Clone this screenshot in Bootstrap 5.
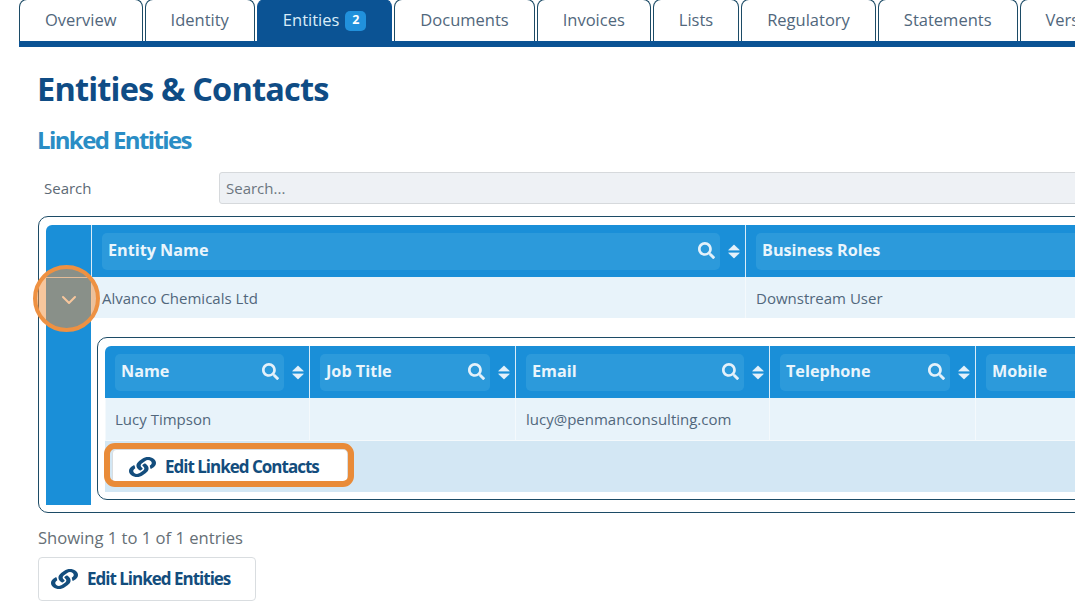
<!DOCTYPE html>
<html lang="en">
<head>
<meta charset="utf-8">
<title>Entities & Contacts</title>
<link href="https://cdn.jsdelivr.net/npm/bootstrap@5.3.0/dist/css/bootstrap.min.css" rel="stylesheet">
<style>
html,body{height:601px;overflow:hidden;background:#fff}
body{font-family:"Open Sans","Liberation Sans",sans-serif;color:#51677c;position:relative}
.page-shell{width:1500px;padding-left:19px}
.tab-strip{flex-wrap:nowrap;margin-top:-1px;border-bottom:6px solid #0b5394;gap:2px;height:48px}
.tab-strip .nav-link{height:42px;margin:0;padding:0 25px;display:flex;align-items:center;font-size:16.5px;color:#51677c;border:1px solid #1c4b66;border-bottom:0;border-radius:8px 8px 0 0;background:#fff;line-height:1}
.tab-strip .nav-link.active{background:#0b5394;color:#d9ecf9;border-color:#0b5394}
.tab-count{background:#2191dc;color:#fff;font-size:12.5px;font-weight:700;border-radius:5px;width:21px;height:20px;display:inline-flex;align-items:center;justify-content:center;margin-left:6px}
.content-pane{padding-left:19px}
.main-title{font-size:32.5px;font-weight:700;color:#0f4c85;letter-spacing:-.82px;margin:20px 0 0 -1px;line-height:44px}
.sub-title{font-size:24px;font-weight:700;color:#2a8dc5;letter-spacing:-1.6px;margin:12px 0 0 -1px;line-height:34px}
.search-row{margin-top:15px;height:32px}
.search-label{width:181px;padding-left:6px;font-size:15px;color:#5d6a75}
.search-input{flex:1;height:32px;font-size:15px;background:#eef1f5;border:1px solid #d6d9dc;border-radius:3px 0 0 3px;padding:0 6px;color:#5d6a75}
.search-input::placeholder{color:#6c7680;opacity:1}
.frame-box{border:1px solid #1c4b66;border-radius:10px;padding:8px 7px;margin-top:12px;height:297px}
.frame-box.frame-inner{margin:0;height:163px;padding:8px 7px;border-radius:10px}
.data-grid{table-layout:fixed;border-collapse:separate;border-spacing:0;margin:0;width:auto}
.data-grid>*>tr>*{padding:0;border:0;box-shadow:none;background:none;color:inherit;font-weight:400;vertical-align:middle}
.data-grid>thead>tr>th{background:#1a8fd8;height:52px;border-left:1px solid #d9ecf8;padding:0 5px 0 10px}
.data-grid>thead>tr>th:first-child{border-left:0}
.outer-grid>thead>tr>th:first-child{border-radius:6px 0 0 0}
.inner-grid>thead>tr>th:first-child{border-radius:6px 0 0 0}
.data-grid>tbody>tr>td.data-cell{background:#e8f3fa;height:41px;font-size:15px;color:#51677c;padding-left:10px;border-left:1px solid #f4f9fc}
.outer-grid>tbody>tr>td.data-cell{padding-top:2px}
.inner-grid>tbody>tr>td.data-cell{height:42px}
.inner-grid>tbody>tr>td.data-cell:first-child{padding-left:9px}
.outer-grid>tbody>tr>td.rail-cell{background:#1a8fd8;padding:0;text-align:center;border-left:0;border-top:1px solid #d9ecf8}
.outer-grid>tbody>tr>td.rail-fill{background:#1a8fd8;border-top:0}
.outer-grid>tbody>tr>td.nest-cell{padding:19px 0 5px 6px;vertical-align:top}
.head-wrap{display:flex;align-items:center;gap:8px;color:#fff}
.head-pill{flex:1;min-width:0;height:37px;background:#2c9adb;border-radius:5px;display:flex;align-items:center;justify-content:space-between;padding:0 5px 2px 6px;font-size:16.2px;font-weight:700;color:#eaf5fc;white-space:nowrap}
.ico-search{width:17px;height:17px;fill:#e4f1fa;flex:none}
.ico-sort{width:12px;height:15px;fill:#e4f1fa;flex:none}
.ico-chev{width:16px;height:10px;fill:none;stroke:#fff;stroke-width:2;stroke-linecap:round;stroke-linejoin:round}
.tool-row>td{background:#d3e7f4!important;height:52px;padding:0 0 0 7px!important;border-top:1px solid #f4f9fc!important}
.action-btn{display:inline-flex;align-items:center;gap:9px;background:#fff;border:1px solid #d9dde0;border-radius:4px;color:#134d7d;font-weight:700;letter-spacing:-1px;font-size:17px;padding:0}
.action-small{width:236px;height:35px;padding-left:16px}
.action-wide{width:218px;height:44px;padding-left:12px}
.ico-link{width:27px;height:20px;fill:#134d7d;flex:none}
.entries-note{font-size:16.6px;color:#666f76;margin-top:14px;line-height:22px;margin-bottom:8px}
.spot-ring{position:absolute;left:33px;top:265px;width:67px;height:67px;border-radius:50%;border:4px solid #ee9142;background:rgba(240,145,66,.52)}
.spot-box{position:absolute;left:104px;top:443px;width:250px;height:44px;border:6px solid #e98b38;border-radius:11px}
</style>
</head>
<body>
<svg width="0" height="0" class="d-block position-absolute" aria-hidden="true">
<defs>
<symbol id="s-search" viewBox="0 0 512 512"><path d="M505 442.7L405.3 343c-4.5-4.5-10.6-7-17-7H372c27.6-35.3 44-79.7 44-128C416 93.1 322.9 0 208 0S0 93.1 0 208s93.1 208 208 208c48.3 0 92.7-16.4 128-44v16.3c0 6.4 2.5 12.5 7 17l99.7 99.7c9.4 9.4 24.6 9.4 33.9 0l28.3-28.3c9.4-9.4 9.4-24.6.1-34zM208 336c-70.7 0-128-57.2-128-128 0-70.7 57.2-128 128-128 70.7 0 128 57.2 128 128 0 70.7-57.2 128-128 128z"/></symbol>
<symbol id="s-sort" viewBox="0 0 12 15"><path d="M6 .9 11.3 6H.7zM6 14.1.7 9h10.6z" stroke="#e4f1fa" stroke-width=".8" stroke-linejoin="round"/></symbol>
<symbol id="s-link" viewBox="0 0 512 512" preserveAspectRatio="none"><path d="M326.612 185.391c59.747 59.809 58.927 155.698.36 214.59-.11.12-.24.25-.36.37l-67.2 67.2c-59.27 59.27-155.699 59.262-214.96 0-59.27-59.26-59.27-155.7 0-214.96l37.106-37.106c9.84-9.84 26.786-3.3 27.294 10.606.648 17.722 3.826 35.527 9.69 52.721 1.986 5.822.567 12.262-3.783 16.612l-13.087 13.087c-28.026 28.026-28.905 73.66-1.155 101.96 28.024 28.579 74.086 28.749 102.325.51l67.2-67.19c28.191-28.191 28.073-73.757 0-101.83-3.701-3.694-7.429-6.564-10.341-8.569a16.037 16.037 0 0 1-6.947-12.606c-.396-10.567 3.348-21.456 11.698-29.806l21.054-21.055c5.521-5.521 14.182-6.199 20.584-1.731a152.482 152.482 0 0 1 20.522 17.197zM467.547 44.449c-59.261-59.262-155.69-59.27-214.96 0l-67.2 67.2c-.12.12-.25.25-.36.37-58.566 58.892-59.387 154.781.36 214.59a152.454 152.454 0 0 0 20.521 17.196c6.402 4.468 15.064 3.789 20.584-1.731l21.054-21.055c8.35-8.35 12.094-19.239 11.698-29.806a16.037 16.037 0 0 0-6.947-12.606c-2.912-2.005-6.64-4.875-10.341-8.569-28.073-28.073-28.191-73.639 0-101.83l67.2-67.19c28.239-28.239 74.3-28.069 102.325.51 27.75 28.3 26.872 73.934-1.155 101.96l-13.087 13.087c-4.35 4.35-5.769 10.79-3.783 16.612 5.864 17.194 9.042 34.999 9.69 52.721.509 13.906 17.454 20.446 27.294 10.606l37.106-37.106c59.271-59.259 59.271-155.699.001-214.959z"/></symbol>
</defs>
</svg>
<div class="page-shell">
  <ul class="nav nav-tabs tab-strip">
    <li class="nav-item"><a class="nav-link" href="#">Overview</a></li>
    <li class="nav-item"><a class="nav-link" href="#">Identity</a></li>
    <li class="nav-item"><a class="nav-link active" href="#">Entities <span class="tab-count">2</span></a></li>
    <li class="nav-item"><a class="nav-link" href="#">Documents</a></li>
    <li class="nav-item"><a class="nav-link" href="#">Invoices</a></li>
    <li class="nav-item"><a class="nav-link" href="#">Lists</a></li>
    <li class="nav-item"><a class="nav-link" href="#">Regulatory</a></li>
    <li class="nav-item"><a class="nav-link" href="#">Statements</a></li>
    <li class="nav-item"><a class="nav-link" href="#">Versions</a></li>
  </ul>
  <div class="content-pane">
    <h1 class="main-title">Entities &amp; Contacts</h1>
    <h2 class="sub-title">Linked Entities</h2>
    <div class="d-flex align-items-center search-row">
      <label class="search-label" for="q">Search</label>
      <input id="q" class="search-input" type="text" placeholder="Search...">
    </div>
    <div class="frame-box">
      <table class="table data-grid outer-grid">
        <colgroup><col style="width:45px"><col style="width:654px"><col style="width:700px"></colgroup>
        <thead><tr>
          <th></th>
          <th><div class="head-wrap"><div class="head-pill"><span>Entity Name</span><svg class="ico-search"><use href="#s-search"/></svg></div><svg class="ico-sort"><use href="#s-sort"/></svg></div></th>
          <th><div class="head-wrap"><div class="head-pill"><span>Business Roles</span></div></div></th>
        </tr></thead>
        <tbody>
          <tr>
            <td class="rail-cell"><svg class="ico-chev" viewBox="0 0 16 10"><path d="M2 2l6 6 6-6"/></svg></td>
            <td class="data-cell">Alvanco Chemicals Ltd</td>
            <td class="data-cell">Downstream User</td>
          </tr>
          <tr>
            <td class="rail-cell rail-fill"></td>
            <td class="nest-cell" colspan="2">
              <div class="frame-box frame-inner">
                <table class="table data-grid inner-grid">
                  <colgroup><col style="width:204px"><col style="width:206px"><col style="width:254px"><col style="width:206px"><col style="width:300px"></colgroup>
                  <thead><tr>
                    <th><div class="head-wrap"><div class="head-pill"><span>Name</span><svg class="ico-search"><use href="#s-search"/></svg></div><svg class="ico-sort"><use href="#s-sort"/></svg></div></th>
                    <th><div class="head-wrap"><div class="head-pill"><span>Job Title</span><svg class="ico-search"><use href="#s-search"/></svg></div><svg class="ico-sort"><use href="#s-sort"/></svg></div></th>
                    <th><div class="head-wrap"><div class="head-pill"><span>Email</span><svg class="ico-search"><use href="#s-search"/></svg></div><svg class="ico-sort"><use href="#s-sort"/></svg></div></th>
                    <th><div class="head-wrap"><div class="head-pill"><span>Telephone</span><svg class="ico-search"><use href="#s-search"/></svg></div><svg class="ico-sort"><use href="#s-sort"/></svg></div></th>
                    <th><div class="head-wrap"><div class="head-pill"><span>Mobile</span><svg class="ico-search"><use href="#s-search"/></svg></div><svg class="ico-sort"><use href="#s-sort"/></svg></div></th>
                  </tr></thead>
                  <tbody>
                    <tr>
                      <td class="data-cell">Lucy Timpson</td>
                      <td class="data-cell"></td>
                      <td class="data-cell">lucy@penmanconsulting.com</td>
                      <td class="data-cell"></td>
                      <td class="data-cell"></td>
                    </tr>
                    <tr class="tool-row"><td colspan="5"><button type="button" class="action-btn action-small"><svg class="ico-link"><use href="#s-link"/></svg>Edit Linked Contacts</button></td></tr>
                  </tbody>
                </table>
              </div>
            </td>
          </tr>
        </tbody>
      </table>
    </div>
    <div class="entries-note">Showing 1 to 1 of 1 entries</div>
    <button type="button" class="action-btn action-wide"><svg class="ico-link"><use href="#s-link"/></svg>Edit Linked Entities</button>
  </div>
</div>
<div class="spot-ring"></div>
<div class="spot-box"></div>
<script src="https://cdn.jsdelivr.net/npm/bootstrap@5.3.0/dist/js/bootstrap.bundle.min.js"></script>
</body>
</html>
